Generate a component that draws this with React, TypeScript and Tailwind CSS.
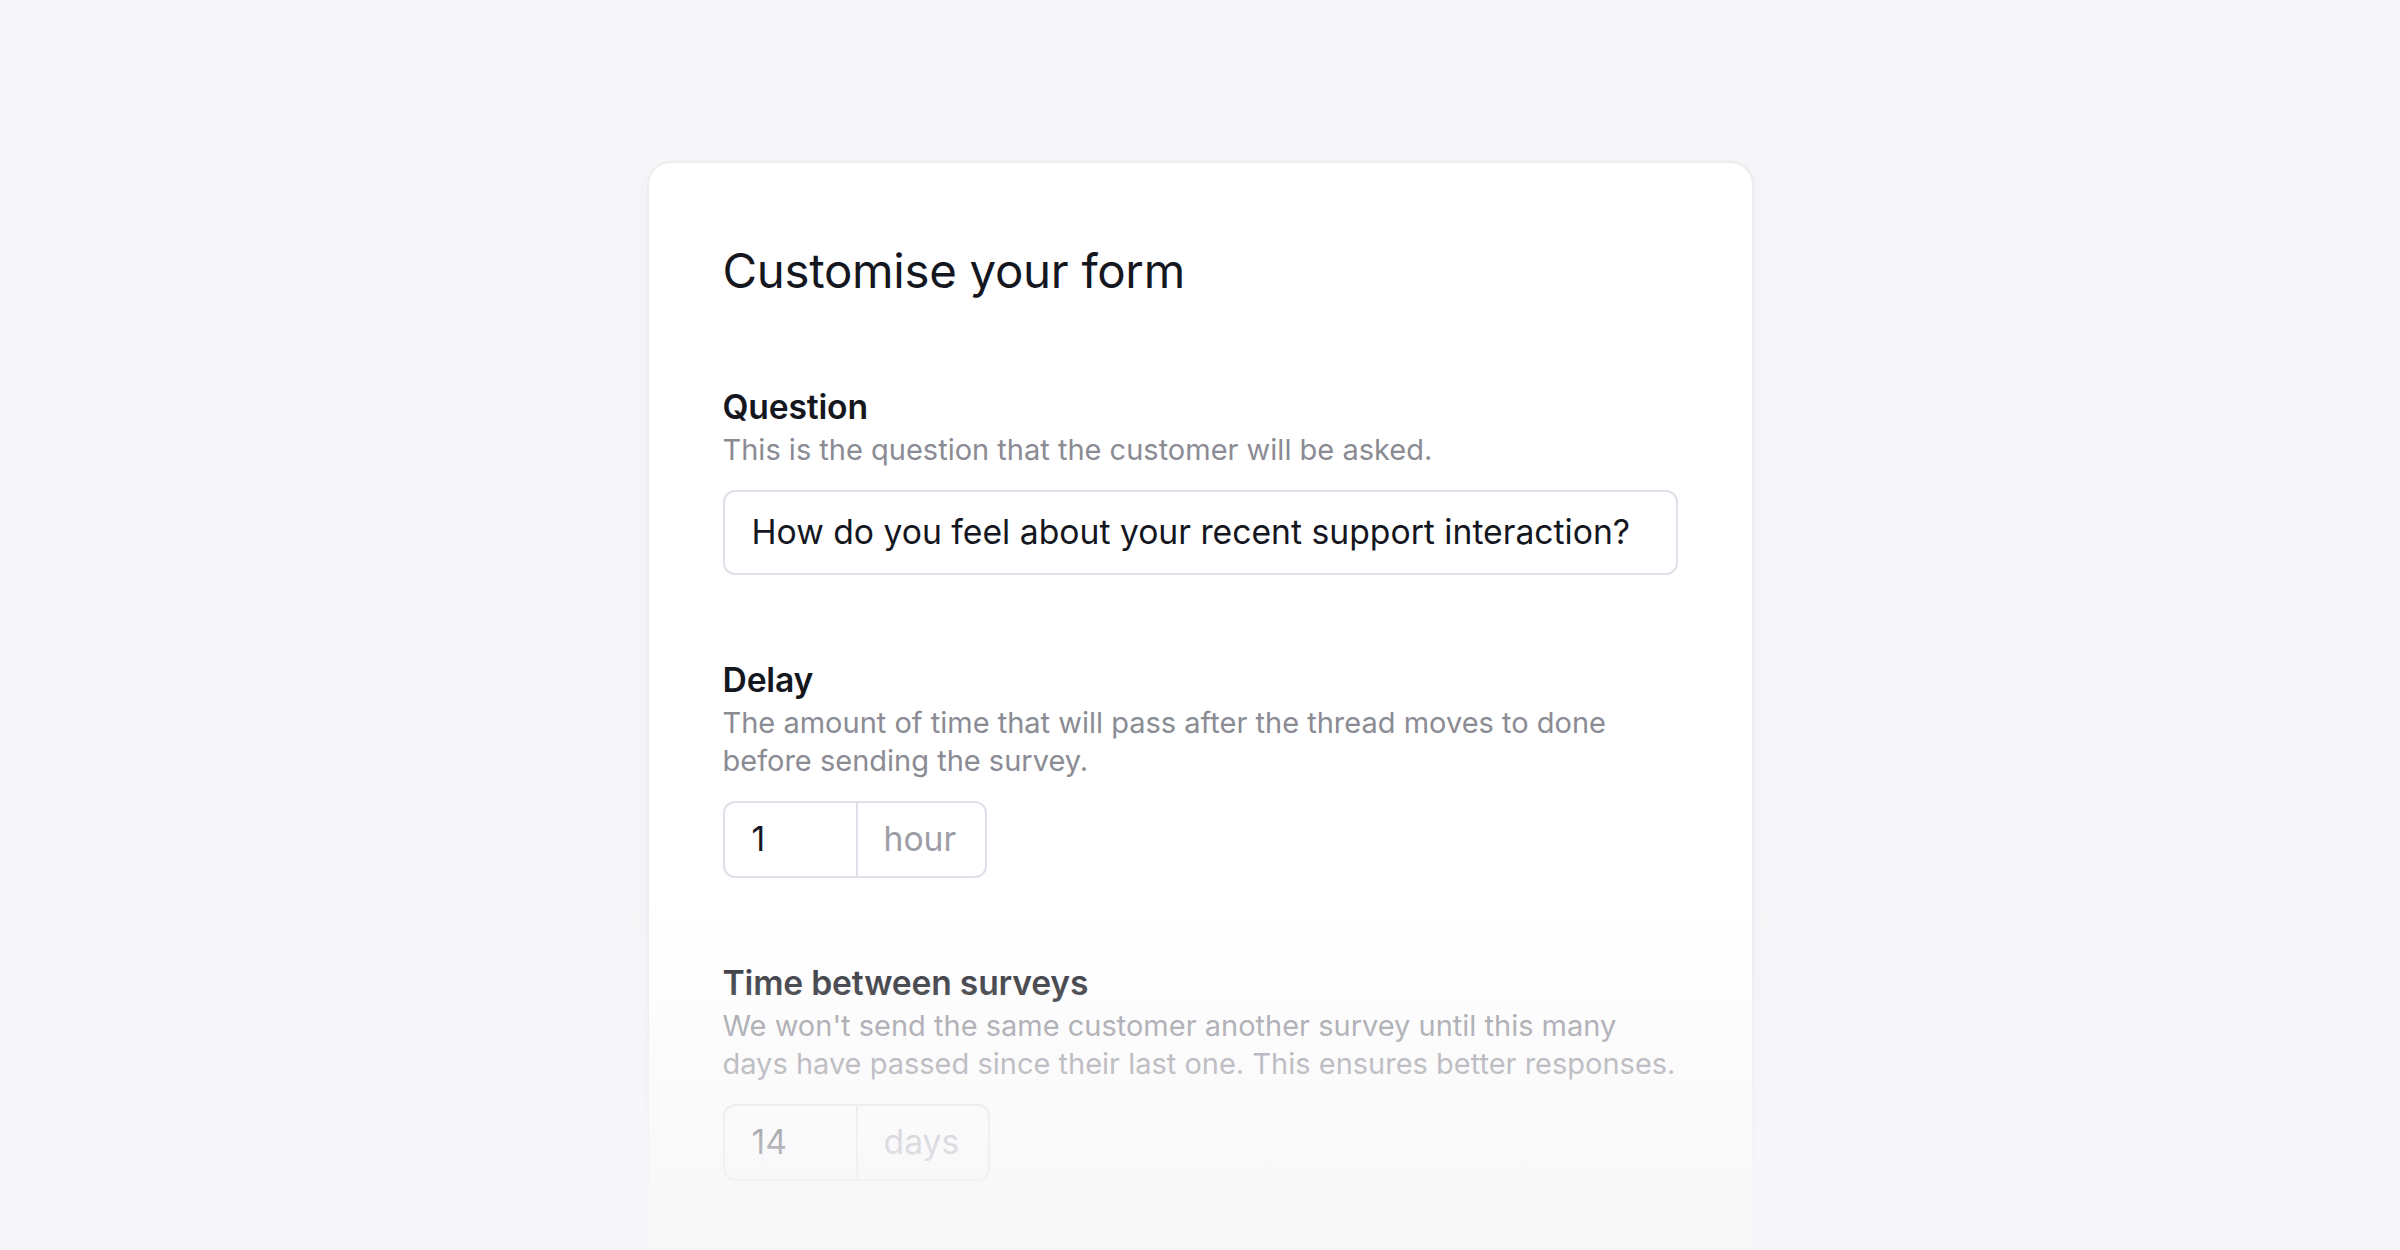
import React from "react";

function Field({
  label,
  desc,
  children,
  gap = "mt-[21px]",
}: {
  label: string;
  desc: React.ReactNode;
  children: React.ReactNode;
  gap?: string;
}) {
  return (
    <div className="flex flex-col">
      <div className="text-[33.7px] leading-[40px] font-semibold tracking-[-0.2px] text-[#15171f]">{label}</div>
      <div className="mt-[4px] text-[29px] leading-[38px] text-[#8b8b94]">{desc}</div>
      <div className={gap}>{children}</div>
    </div>
  );
}

function UnitInput({ value, unit, wide = false }: { value: string; unit: string; wide?: boolean }) {
  return (
    <div
      className={`flex h-[77px] rounded-[12px] border-2 border-[#dfe0e8] bg-white ${
        wide ? "w-[267px]" : "w-[264px]"
      }`}
    >
      <div className="w-[133px] flex items-center pl-[27px] text-[33.7px] border-r-2 border-[#dfe0e8] text-[#15171f]">
        {value}
      </div>
      <div className="flex-1 flex items-center pl-[26px] text-[33.7px] text-[#9d9da6]">{unit}</div>
    </div>
  );
}

export default function App() {
  return (
    <div
      className="relative h-[1250px] w-full overflow-hidden bg-[#f7f7f9] flex justify-center"
      style={{ fontFamily: "Inter, 'Noto Sans', sans-serif" }}
    >
      <div className="mt-[161px] w-[1107px] h-[1200px] shrink-0 rounded-[24px] bg-white border-2 border-[#ededf1] shadow-[0_4px_24px_rgba(20,20,40,0.04)] px-[74px] pt-[79px]">
        <h1 className="text-[47.4px] leading-[58px] font-normal text-[#15171f] tracking-[-0.3px]">
          Customise your form
        </h1>

        <div className="mt-[87px]">
          <Field label="Question" desc="This is the question that the customer will be asked.">
            <div className="h-[85px] w-full rounded-[12px] border-2 border-[#dfe0e8] flex items-center pl-[27px] text-[33.7px] text-[#15171f]">
              How do you feel about your recent support interaction?
            </div>
          </Field>
        </div>

        <div className="mt-[85px]">
          <Field
            label="Delay"
            gap="mt-[21px]"
            desc={
              <>
                The amount of time that will pass after the thread moves to done
                <br />
                before sending the survey.
              </>
            }
          >
            <UnitInput value="1" unit="hour" />
          </Field>
        </div>

        <div className="mt-[85px]">
          <Field
            label="Time between surveys"
            gap="mt-[21px]"
            desc={
              <>
                We won't send the same customer another survey until this many
                <br />
                days have passed since their last one. This ensures better responses.
              </>
            }
          >
            <UnitInput value="14" unit="days" wide />
          </Field>
        </div>
      </div>

      <div className="pointer-events-none absolute left-0 right-0 bottom-0 h-[350px] bg-gradient-to-b from-[rgba(247,247,249,0)] to-[#f7f7f9]" />
    </div>
  );
}
